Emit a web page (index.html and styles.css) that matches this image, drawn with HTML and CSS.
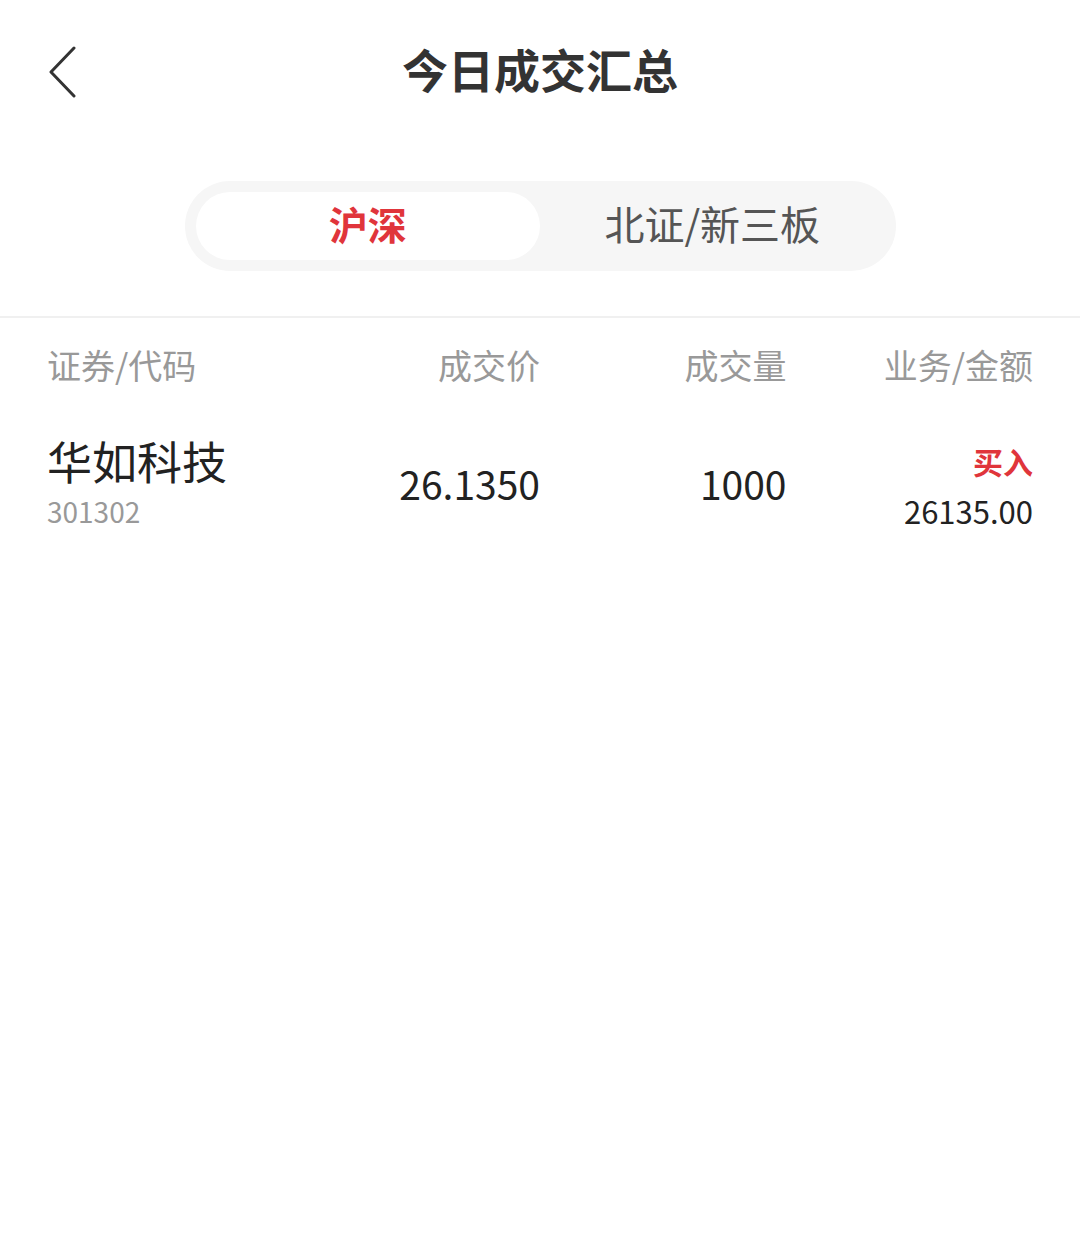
FILE: index.html
```html
<!DOCTYPE html>
<html lang="zh-CN">
<head>
    <meta charset="UTF-8">
    <meta name="viewport" content="width=device-width, initial-scale=1.0">
    <title>今日成交汇总</title>
    <link rel="stylesheet" href="styles.css">
</head>
<body>
    <div class="header">
        <span class="back">
            <svg width="30" height="52" viewBox="0 0 30 52">
                <polyline points="26,2 3,26 26,50" fill="none" stroke="#333" stroke-width="3" stroke-linejoin="round" stroke-linecap="round"/>
            </svg>
        </span>
        <h1 class="title">今日成交汇总</h1>
    </div>

    <div class="tabs-wrap">
        <div class="tabs">
            <div class="tab active">沪深</div>
            <div class="tab">北证/新三板</div>
        </div>
    </div>

    <div class="table">
        <div class="row head">
            <div class="cell left">证券/代码</div>
            <div class="cell">成交价</div>
            <div class="cell">成交量</div>
            <div class="cell">业务/金额</div>
        </div>
        <div class="row item">
            <div class="cell left">
                <div class="name">华如科技</div>
                <div class="code">301302</div>
            </div>
            <div class="cell num">26.1350</div>
            <div class="cell num">1000</div>
            <div class="cell trade">
                <div class="biz">买入</div>
                <div class="amount">26135.00</div>
            </div>
        </div>
    </div>
</body>
</html>
```

FILE: styles.css
```css
body {
  margin: 0;
  background: #fff;
  font-family: "Noto Sans CJK SC", "Noto Sans", sans-serif;
  color: #222;
}

.header {
  position: relative;
  height: 144px;
  display: flex;
  align-items: center;
  justify-content: center;
}

.back {
  position: absolute;
  left: 48px;
  top: 46px;
  display: flex;
}

.title {
  margin: 0 0 8px;
  font-size: 46px;
  font-weight: 700;
  color: #333;
}

.tabs-wrap {
  display: flex;
  justify-content: center;
  padding: 37px 0 45px;
  border-bottom: 2px solid #f0f0f0;
}

.tabs {
  width: 689px;
  padding: 11px;
  display: flex;
  background: #f6f6f6;
  border-radius: 45px;
}

.tab {
  flex: 1;
  height: 62px;
  padding-bottom: 6px;
  display: flex;
  align-items: center;
  justify-content: center;
  font-size: 40px;
  color: #555;
  border-radius: 34px;
}

.tab.active {
  background: #fff;
  color: #e0353b;
  font-weight: 700;
  font-size: 39px;
}

.table {
  padding: 0 47px;
}

.row {
  display: grid;
  grid-template-columns: repeat(4, 1fr);
  align-items: center;
}

.cell {
  text-align: right;
}

.cell.left {
  text-align: left;
}

.head {
  height: 92px;
  font-size: 34px;
  color: #999;
}

.item {
  height: 146px;
}

.name {
  font-size: 45px;
  line-height: 56px;
  color: #222;
}

.code {
  font-size: 28px;
  line-height: 44px;
  color: #999;
}

.num {
  font-size: 39px;
  font-weight: 400;
  color: #222;
}

.trade {
  padding-top: 7px;
}

.biz {
  font-size: 30px;
  line-height: 48px;
  font-weight: 700;
  color: #e0353b;
}

.amount {
  font-size: 31px;
  line-height: 52px;
  color: #222;
}
```
